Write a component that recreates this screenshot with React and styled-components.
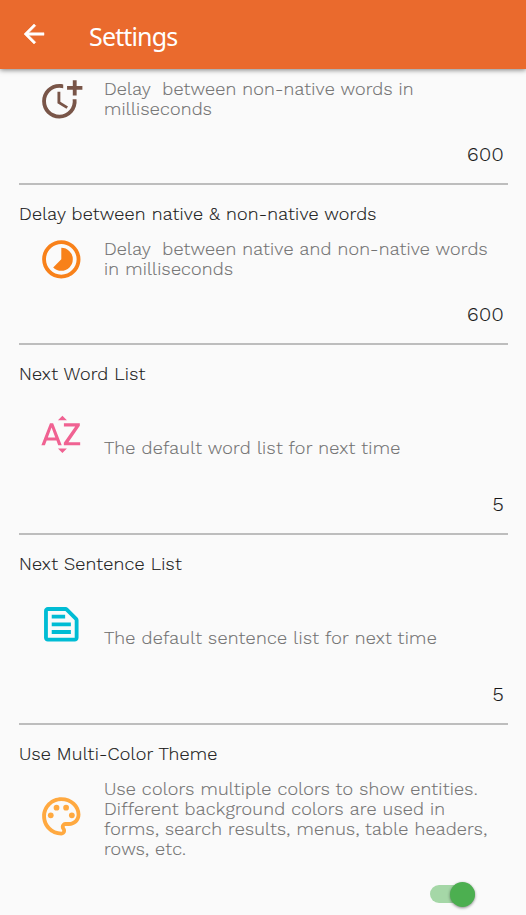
import React from "react";
import styled, { createGlobalStyle } from "styled-components";
import {
  MdArrowBack,
  MdMoreTime,
  MdTimelapse,
  MdSortByAlpha,
  MdOutlineTextSnippet,
  MdOutlineColorLens,
} from "react-icons/md";

const GlobalStyle = createGlobalStyle`
  * { box-sizing: border-box; }
  html, body { margin: 0; height: 100%; overflow: hidden; background: #fafafa; }
`;

const Screen = styled.div`
  height: 915px;
  display: flex;
  flex-direction: column;
  overflow: hidden;
  background: #fafafa;
  font-family: "Work Sans", Inter, sans-serif;
  font-weight: 300;
  -webkit-text-stroke: 0.15px;
`;

const AppBar = styled.header`
  flex: none;
  z-index: 1;
  height: 69px;
  padding: 0 19px;
  display: flex;
  align-items: center;
  gap: 40px;
  color: #fff;
  background: #ea6a2d;
  box-shadow: 0 1px 5px rgba(0, 0, 0, 0.5);
`;

const BackIcon = styled(MdArrowBack)`
  width: 30px;
  height: 30px;
  margin-bottom: 1px;
  path:not([fill="none"]) {
    stroke: #fff;
    stroke-width: 0.4px;
  }
  path[fill="none"] {
    stroke: none;
  }
`;

const Title = styled.h1`
  margin: 2px 0 0;
  font: 400 25px/34px "Noto Sans", sans-serif;
  letter-spacing: -0.85px;
  -webkit-text-stroke: 0;
`;

const List = styled.main`
  flex: 1;
  min-height: 0;
  display: flex;
  flex-direction: column;
`;

const Setting = styled.section`
  flex: none;
  height: ${(p) => p.$height}px;
  margin: 0 18px 0 19px;
  display: flex;
  flex-direction: column;
  border-bottom: 2px solid #bdbdbd;
  &:last-child { border-bottom: 0; }
`;

const Name = styled.h2`
  margin: 19px 0 0;
  flex: none;
  font-size: 18px;
  line-height: 20px;
  font-weight: 300;
  letter-spacing: 0.23px;
  color: #161616;
`;

const Details = styled.div`
  flex: none;
  display: flex;
  height: ${(p) => p.$height}px;
  margin-top: ${(p) => p.$top}px;
`;

const IconSlot = styled.div`
  flex: none;
  width: 85px;
  padding-left: 19px;
  padding-top: ${(p) => p.$top}px;
  color: ${(p) => p.$color};
  svg {
    display: block;
    width: 46px;
    height: 46px;
    transform: translate(0.3px, 0.3px);
  }
`;

const Description = styled.p`
  margin: ${(p) => p.$top || 0}px 0 0;
  font-size: 18px;
  line-height: 20px;
  letter-spacing: ${(p) => p.$tracking || 0.21}px;
  white-space: pre;
  color: #707070;
`;

const Value = styled.div`
  padding-right: 4px;
  text-align: right;
  font-size: 20px;
  line-height: 24px;
  letter-spacing: 0.4px;
  color: #161616;
`;

const Switch = styled.button`
  align-self: flex-end;
  flex: none;
  display: flex;
  align-items: center;
  justify-content: flex-end;
  width: 45px;
  height: 18px;
  margin: 0 33px 0 0;
  padding: 0;
  border: 0;
  border-radius: 9px;
  background: #a5d7a7;
`;

const Thumb = styled.span`
  flex: none;
  width: 25px;
  height: 25px;
  border-radius: 50%;
  background: #4caf50;
  box-shadow: 0 1px 3px rgba(0, 0, 0, 0.45);
`;

const settings = [
  {
    id: "non-native-delay",
    text: "Delay  between non-native words in\nmilliseconds",
    Icon: MdMoreTime, color: "#795548", value: "600",
  },
  {
    id: "native-delay",
    name: "Delay between native & non-native words",
    text: "Delay  between native and non-native words\nin milliseconds",
    Icon: MdTimelapse, color: "#f8811a", value: "600",
  },
  {
    id: "word-list",
    name: "Next Word List",
    text: "The default word list for next time",
    Icon: MdSortByAlpha, color: "#f06292", value: "5", tall: true,
  },
  {
    id: "sentence-list",
    name: "Next Sentence List",
    text: "The default sentence list for next time",
    Icon: MdOutlineTextSnippet, color: "#00bcd4", value: "5", tall: true,
  },
];

export default function App() {
  return (
    <Screen>
      <GlobalStyle />
      <AppBar>
        <BackIcon />
        <Title>Settings</Title>
      </AppBar>
      <List>
        {settings.map(({ id, name, text, Icon, color, value, tall }) => (
          <Setting key={id} $height={tall ? 190 : name ? 160 : 116}>
            {name && <Name>{name}</Name>}
            <Details $top={name ? 12 : 7} $height={tall ? 96 : 66}>
              <IconSlot $top={tall ? 15 : 0} $color={color}>
                <Icon />
              </IconSlot>
              <Description $top={tall ? 42 : 3} $tracking={tall ? 0.29 : 0.21}>
                {text}
              </Description>
            </Details>
            <Value>{value}</Value>
          </Setting>
        ))}
        <Setting $height={190}>
          <Name>Use Multi-Color Theme</Name>
          <Details $top={15} $height={106}>
            <IconSlot $top={14} $color="#ffa940">
              <MdOutlineColorLens />
            </IconSlot>
            <Description $tracking={0.23}>
              {"Use colors multiple colors to show entities.\nDifferent background colors are used in\nforms, search results, menus, table headers,\nrows, etc."}
            </Description>
          </Details>
          <Switch aria-label="Use Multi-Color Theme" role="switch" aria-checked="true">
            <Thumb />
          </Switch>
        </Setting>
      </List>
    </Screen>
  );
}
